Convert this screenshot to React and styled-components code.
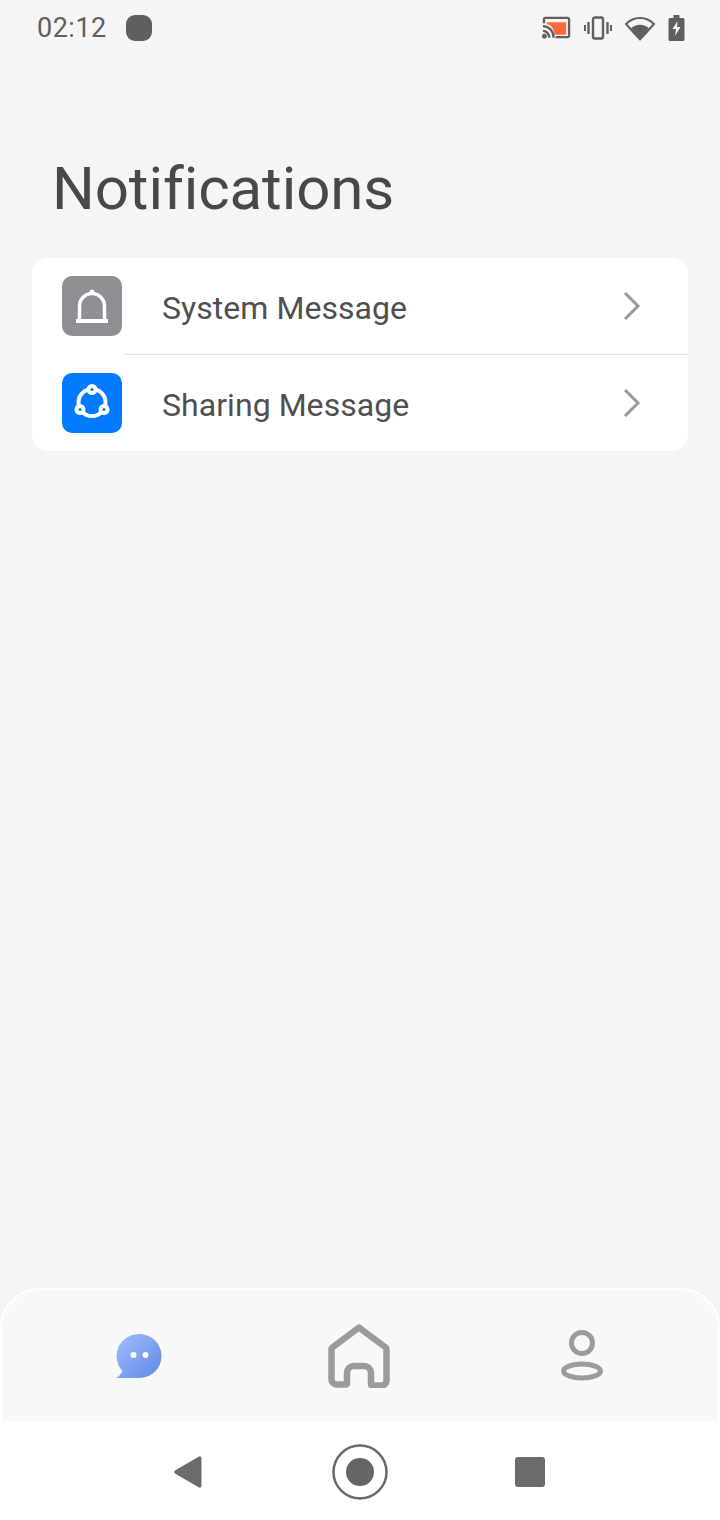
import styled, { createGlobalStyle } from "styled-components";

const GlobalStyle = createGlobalStyle`
  html, body {
    margin: 0;
    padding: 0;
    background: #f5f5f5;
  }
  * {
    box-sizing: border-box;
  }
`;

const Screen = styled.div`
  width: 720px;
  height: 1520px;
  display: flex;
  flex-direction: column;
  background: #f5f5f5;
  font-family: Roboto, "Liberation Sans", sans-serif;
  overflow: hidden;
`;

const StatusBar = styled.div`
  height: 56px;
  flex: none;
  display: flex;
  align-items: center;
  justify-content: space-between;
  padding: 0 35px 0 37px;
`;

const StatusLeft = styled.div`
  display: flex;
  align-items: center;
  gap: 19px;
`;

const Clock = styled.span`
  font-size: 27px;
  font-weight: 400;
  letter-spacing: 0.5px;
  color: #5f5f5f;
`;

const StatusDot = styled.span`
  width: 26px;
  height: 26px;
  border-radius: 9px;
  background: #5f5f5f;
`;

const StatusIcons = styled.div`
  display: flex;
  align-items: center;
  gap: 13px;
`;

const Main = styled.main`
  flex: 1;
  padding: 0 32px;
`;

const Title = styled.h1`
  margin: 96px 0 32px 20px;
  font-size: 60px;
  line-height: 74px;
  font-weight: 400;
  letter-spacing: -0.08px;
  color: #484848;
`;

const Card = styled.section`
  background: #fff;
  border-radius: 16px;
  overflow: hidden;
`;

const Row = styled.div`
  height: 96px;
  display: flex;
  align-items: center;
  padding: 0 46px 0 30px;
  position: relative;

  & + & {
    height: 97px;
    padding-top: 1px;
  }

  & + &::before {
    content: "";
    position: absolute;
    top: 0;
    left: 92px;
    right: 0;
    height: 1px;
    background: #dedede;
  }
`;

const IconTile = styled.div`
  width: 60px;
  height: 60px;
  flex: none;
  border-radius: 10px;
  display: flex;
  align-items: center;
  justify-content: center;
  background: ${(p) => p.$color};
`;

const RowLabel = styled.span`
  flex: 1;
  margin-left: 40px;
  padding-top: 4px;
  font-size: 32px;
  letter-spacing: 0.05px;
  color: #4f4f4f;
`;

const TabBar = styled.nav`
  height: 133px;
  flex: none;
  display: grid;
  grid-template-columns: 273px 168px 277px;
  align-items: center;
  justify-items: center;
  background: #f8f8f8;
  border: 2px solid #fff;
  border-bottom: 0;
  border-radius: 40px 40px 0 0;
`;

const SystemNav = styled.div`
  height: 99px;
  flex: none;
  display: grid;
  grid-template-columns: 172px 172px 168px;
  align-items: center;
  justify-items: center;
  background: #fff;
  padding: 2px 0 0 102px;
`;

const Chevron = () => (
  <svg width="20" height="30" viewBox="0 0 20 30" fill="none">
    <path d="M3 2 L16 15 L3 28" stroke="#999" strokeWidth="3" />
  </svg>
);

const CastIcon = () => (
  <svg width="29" height="24" viewBox="0 0 30 24">
    <path d="M2 7V3a1.500 1.500 0 0 1 1.500-1.500h23A1.500 1.500 0 0 1 28 3v17a1.500 1.500 0 0 1-1.500 1.500H14" fill="none" stroke="#5f5f5f" strokeWidth="2.400" />
    <path d="M5 6h20v13H13C12 12 10 9 5 8z" fill="#ff6a3a" />
    <path d="M1 10c6 0 11 5 11 12M1 15c3.500 0 6.500 3 6.500 7" fill="none" stroke="#5f5f5f" strokeWidth="2.400" />
    <circle cx="2.500" cy="20.500" r="2.500" fill="#5f5f5f" />
  </svg>
);

const VibrateIcon = () => (
  <svg width="28" height="24" viewBox="0 0 28 24" fill="none" stroke="#5f5f5f">
    <rect x="9" y="1.500" width="10" height="21" rx="2" strokeWidth="2.400" />
    <path d="M4.500 6v12M23.500 6v12" strokeWidth="2.400" />
    <path d="M1 9v6M27 9v6" strokeWidth="2" />
  </svg>
);

const WifiIcon = () => (
  <svg width="30" height="26" viewBox="0 0 30 26">
    <path d="M15 24.500 1 9C9 1 21 1 29 9z" fill="none" stroke="#5f5f5f" strokeWidth="2" strokeLinejoin="round" />
    <path d="M15 24.500 6 13.500C11 8.500 19 8.500 24 13.500z" fill="#5f5f5f" />
  </svg>
);

const BatteryIcon = () => (
  <svg width="17" height="26" viewBox="0 0 16 26">
    <path d="M5 0h6v3h3.500A1.500 1.500 0 0 1 16 4.500V24.500A1.500 1.500 0 0 1 14.500 26H1.500A1.500 1.500 0 0 1 0 24.500V4.500A1.500 1.500 0 0 1 1.500 3H5z" fill="#5f5f5f" />
    <path d="M9 6 4 14h3.500L6.500 21 12 12H8.500z" fill="#f5f5f5" />
  </svg>
);

const BellIcon = () => (
  <svg width="34" height="36" viewBox="0 0 34 36" fill="none" stroke="#fff" strokeWidth="3.500">
    <path d="M4.500 32V18a12.500 12.500 0 0 1 25 0v14" />
    <path d="M1 33h32" strokeWidth="4" />
    <circle cx="17" cy="4" r="2.500" fill="#fff" stroke="none" />
  </svg>
);

const ShareIcon = () => (
  <svg width="38" height="38" viewBox="0 0 38 38" fill="none">
    <circle cx="19" cy="18.500" r="13.500" stroke="#fff" strokeWidth="4" />
    <g fill="#007aff" stroke="#fff" strokeWidth="4">
      <circle cx="19" cy="5.500" r="3.500" />
      <circle cx="7" cy="25.500" r="3.500" />
      <circle cx="31" cy="25.500" r="3.500" />
    </g>
  </svg>
);

const ChatIcon = () => (
  <svg width="49" height="46" viewBox="0 0 48 46">
    <defs>
      <linearGradient id="chatFill" x1="0" y1="0" x2="1" y2="1">
        <stop offset="0" stopColor="#a3bdfb" />
        <stop offset="1" stopColor="#5f88e8" />
      </linearGradient>
    </defs>
    <path d="M25 1a22 22 0 0 1 0 44H1c3-1 6-4 7-7A22 22 0 0 1 25 1z" fill="url(#chatFill)" />
    <circle cx="19" cy="22" r="3" fill="#fff" />
    <circle cx="31" cy="22" r="3" fill="#fff" />
  </svg>
);

const HomeIcon = () => (
  <svg width="62" height="64" viewBox="0 0 62 64" fill="none" stroke="#9b9b9b" strokeWidth="6.500" strokeLinejoin="round">
    <path d="M31 3.500 5 23a3 3 0 0 0-1.500 2.500v30a5 5 0 0 0 5 5H18a1 1 0 0 0 1-1V49a7 7 0 0 1 7-7h10a7 7 0 0 1 7 7v11.500a1 1 0 0 0 1 1h9.500a5 5 0 0 0 5-5V25.500A3 3 0 0 0 57 23z" />
  </svg>
);

const UserIcon = () => (
  <svg width="44" height="52" viewBox="0 0 44 52" fill="none" stroke="#9b9b9b" strokeWidth="5">
    <circle cx="22" cy="13" r="10.500" />
    <ellipse cx="22" cy="41" rx="18.500" ry="7" />
  </svg>
);

const BackIcon = () => (
  <svg width="30" height="34" viewBox="0 0 30 34">
    <path d="M2 15.500 26 1.500a2 2 0 0 1 2.500 1.500v28a2 2 0 0 1-2.500 1.500L2 18.500a2 2 0 0 1 0-3z" fill="#6b6b6b" />
  </svg>
);

const HomeNavIcon = () => (
  <svg width="56" height="56" viewBox="0 0 56 56">
    <circle cx="28" cy="28" r="26.500" fill="none" stroke="#6b6b6b" strokeWidth="2.500" />
    <circle cx="28" cy="28" r="14" fill="#666" />
  </svg>
);

const RecentIcon = () => (
  <svg width="30" height="30" viewBox="0 0 30 30">
    <rect width="30" height="30" rx="3" fill="#6b6b6b" />
  </svg>
);

const rows = [
  { label: "System Message", color: "#8e8e93", icon: <BellIcon /> },
  { label: "Sharing Message", color: "#007aff", icon: <ShareIcon /> },
];

export default function App() {
  return (
    <>
      <GlobalStyle />
      <Screen>
        <StatusBar>
          <StatusLeft>
            <Clock>02:12</Clock>
            <StatusDot />
          </StatusLeft>
          <StatusIcons>
            <CastIcon />
            <VibrateIcon />
            <WifiIcon />
            <BatteryIcon />
          </StatusIcons>
        </StatusBar>
        <Main>
          <Title>Notifications</Title>
          <Card>
            {rows.map((row) => (
              <Row key={row.label}>
                <IconTile $color={row.color}>{row.icon}</IconTile>
                <RowLabel>{row.label}</RowLabel>
                <Chevron />
              </Row>
            ))}
          </Card>
        </Main>
        <TabBar>
          <ChatIcon />
          <HomeIcon />
          <UserIcon />
        </TabBar>
        <SystemNav>
          <BackIcon />
          <HomeNavIcon />
          <RecentIcon />
        </SystemNav>
      </Screen>
    </>
  );
}
